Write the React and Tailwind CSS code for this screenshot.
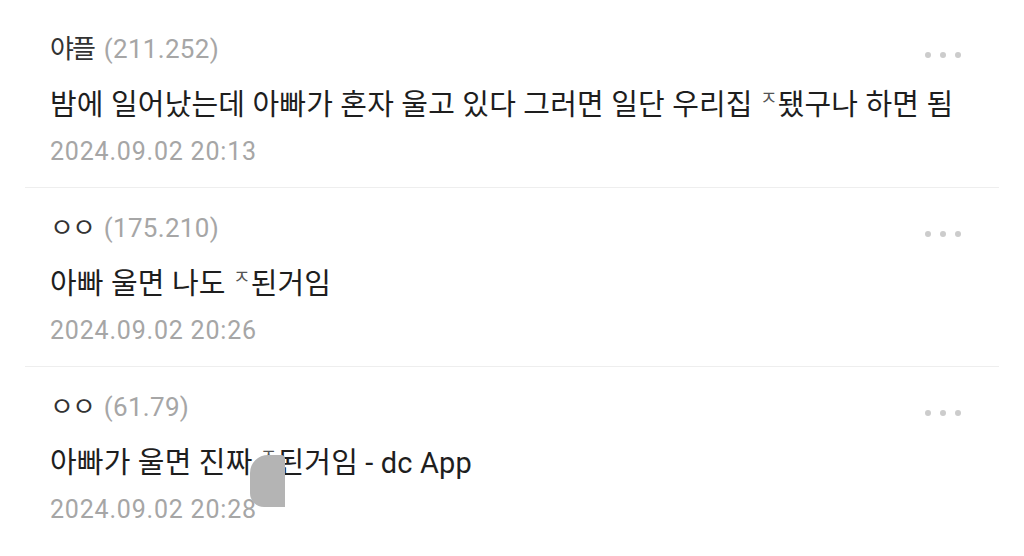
import React from 'react'

const COMMENTS = [
  {
    name: '야플',
    ip: '(211.252)',
    body: [
      { t: '밤에 일어났는데 아빠가 혼자 울고 있다 그러면 일단 우리집 ' },
      { t: 'ㅈ', cut: true },
      { t: '됐구나 하면 됨' },
    ],
    date: '2024.09.02 20:13',
  },
  {
    name: 'ㅇㅇ',
    ip: '(175.210)',
    body: [{ t: '아빠 울면 나도 ' }, { t: 'ㅈ', cut: true }, { t: '된거임' }],
    date: '2024.09.02 20:26',
  },
  {
    name: 'ㅇㅇ',
    ip: '(61.79)',
    body: [{ t: '아빠가 울면 진짜 ' }, { t: 'ㅈ', cut: true }, { t: '된거임 - dc App' }],
    date: '2024.09.02 20:28',
    smudge: true,
  },
]

const FONT = "font-['Roboto','Noto_Sans_CJK_KR',sans-serif]"

function Dots() {
  return (
    <div className="flex gap-[9px] mt-[21px] mr-[38px]">
      <span className="w-[6px] h-[6px] rounded-full bg-[#cccccc]" />
      <span className="w-[6px] h-[6px] rounded-full bg-[#cccccc]" />
      <span className="w-[6px] h-[6px] rounded-full bg-[#cccccc]" />
    </div>
  )
}

export default function App() {
  return (
    <div className={`w-[1024px] h-[556px] bg-white overflow-hidden pt-[9px] px-[25px] ${FONT}`}>
      {COMMENTS.map((c, i) => (
        <div
          key={i}
          className={`relative pt-[22px] pb-[17px] pl-[25px] ${i < COMMENTS.length - 1 ? 'border-b border-[#eeeeee]' : ''}`}
        >
          <div className="flex justify-between items-start h-[36px]">
            <div className="flex items-center h-[36px] text-[26px] tracking-[0.3px]">
              <span className="text-[#333333] mr-[10px] tracking-[-2px]">{c.name}</span>
              <span className="text-[#a6a6a6]">{c.ip}</span>
            </div>
            <Dots />
          </div>
          <div className="mt-[19px] h-[40px] flex items-center text-[29px] tracking-[0.15px] text-[#1e1e1e] whitespace-pre">
            {c.body.map((b, j) =>
              b.cut ? (
                <span key={j} className="text-[19px] self-start mt-[3px] text-[#555555] leading-none">
                  {b.t}
                </span>
              ) : (
                <span key={j}>{b.t}</span>
              )
            )}
          </div>
          <div className="mt-[8px] h-[36px] flex items-center text-[25px] text-[#a6a6a6] tracking-[0.8px]">
            {c.date}
          </div>
          {c.smudge && (
            <div className="absolute left-[225px] top-[88px] w-[35px] h-[52px] bg-[#b4b4b4] rounded-tl-[18px] rounded-bl-[14px] rounded-tr-[4px]" />
          )}
        </div>
      ))}
    </div>
  )
}
